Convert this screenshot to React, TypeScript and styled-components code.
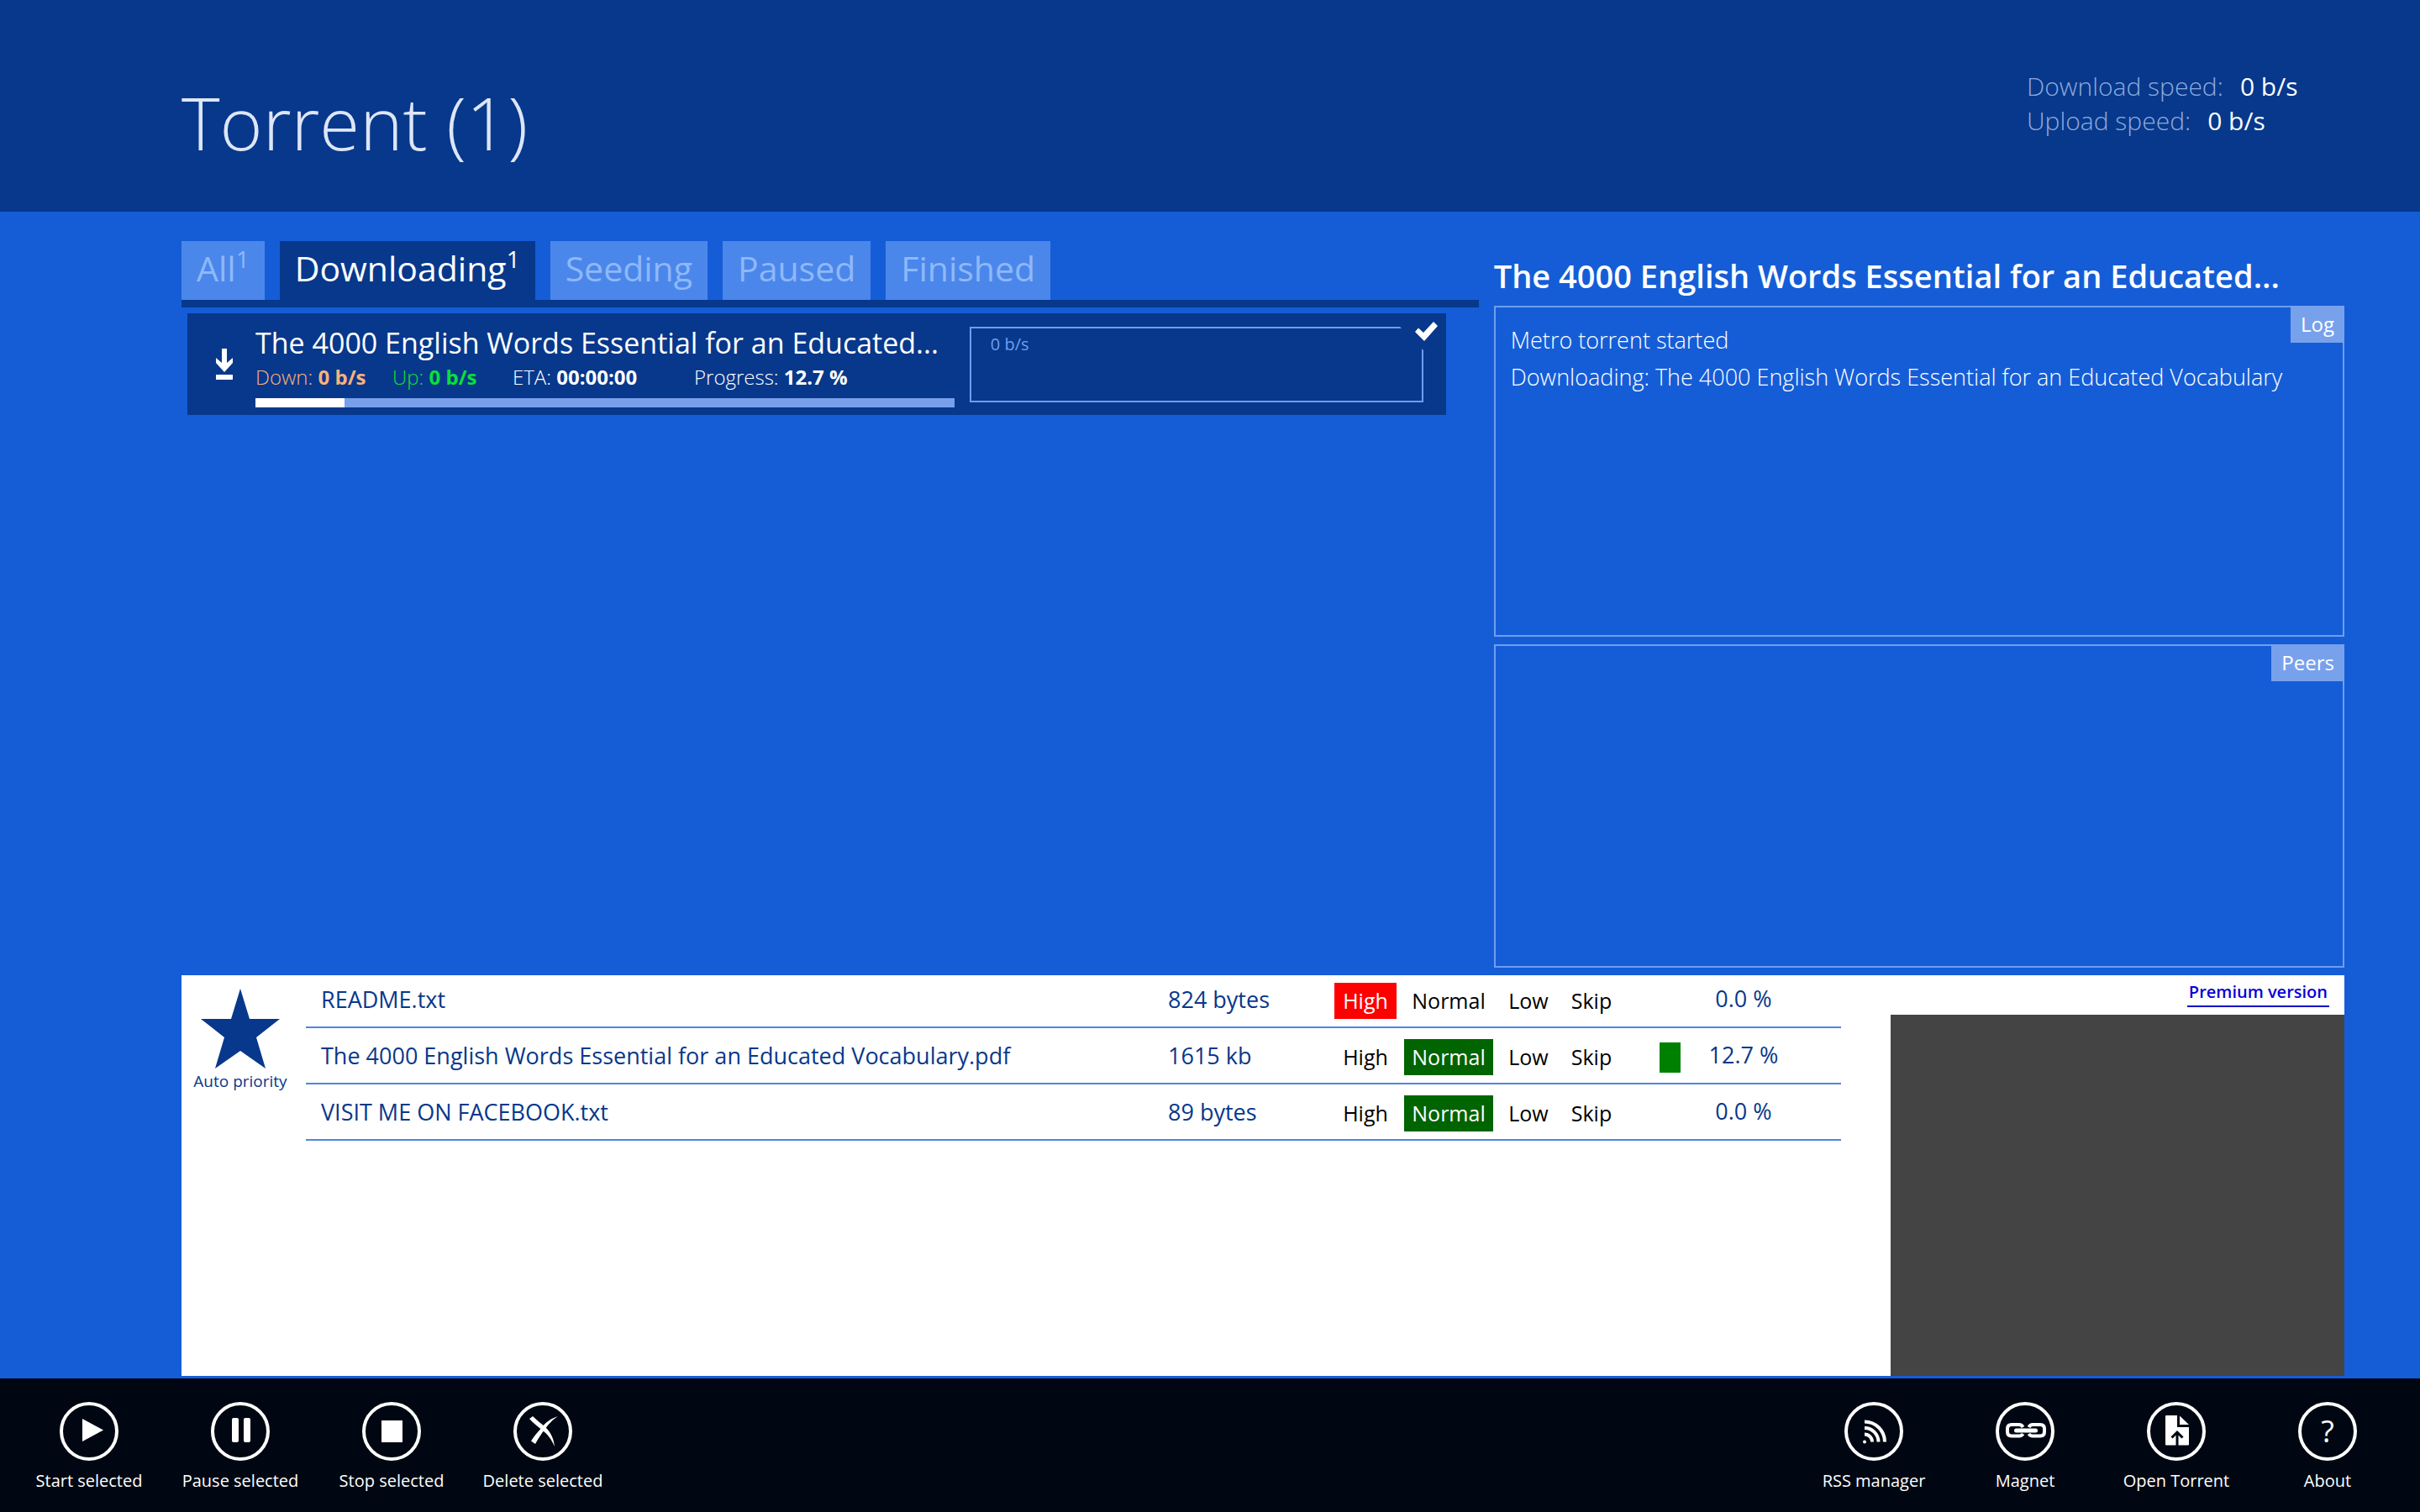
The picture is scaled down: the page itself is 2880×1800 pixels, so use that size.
import React from "react";
import styled, { createGlobalStyle, css } from "styled-components";

const navy = "#07388b";
const blue = "#155dd7";
const line = "#6f9df0";
const tagBlue = "#78a1ec";

const GlobalStyle = createGlobalStyle`
  *, *::before, *::after { box-sizing: border-box; }
  body {
    margin: 0;
    background: ${blue};
    color: #fff;
    font-family: "Open Sans", "Noto Sans", sans-serif;
  }
  button {
    font: inherit;
    color: inherit;
    background: none;
    border: 0;
    padding: 0;
    cursor: pointer;
  }
  h1, h2, h3, p, ul, dl, dd { margin: 0; padding: 0; }
`;

const Page = styled.div`
  min-height: 100vh;
  display: flex;
  flex-direction: column;
`;

const Header = styled.header`
  height: 252px;
  padding: 82px 90px 0 216px;
  background: ${navy};
  display: flex;
  justify-content: space-between;
  align-items: flex-start;
`;

const PageTitle = styled.h1`
  padding-top: 10px;
  font-size: 87px;
  line-height: 106px;
  font-weight: 300;
  color: #dde6f7;
`;

const Speeds = styled.dl`
  width: 378px;
  font-size: 30px;
  line-height: 41px;
`;

const SpeedRow = styled.div`
  display: flex;
  gap: 20px;
`;

const SpeedLabel = styled.dt`
  font-weight: 300;
  color: #8eaade;
`;

const SpeedValue = styled.dd`
  font-weight: 400;
`;

const Main = styled.main`
  flex: 1;
  display: flex;
  flex-direction: column;
  gap: 9px;
  padding: 0 90px 3px 216px;
`;

const Columns = styled.div`
  flex: 1;
  display: grid;
  grid-template-columns: minmax(0, 61fr) minmax(0, 40fr);
  gap: 18px;
`;

const ListColumn = styled.section`
  padding-top: 35px;
`;

const Tabs = styled.div`
  display: flex;
  gap: 18px;
  border-bottom: 9px solid ${navy};
`;

const Tab = styled.button<{ $active?: boolean }>`
  height: 70px;
  padding: 0 18px 5px;
  font-size: 41px;
  line-height: 65px;
  background: ${(p) => (p.$active ? navy : "#4b87ea")};
  color: ${(p) => (p.$active ? "#fff" : "#8fb8fa")};
`;

const Count = styled.sup`
  font-size: 28px;
  line-height: 0;
  vertical-align: 16px;
`;

const TorrentCard = styled.article`
  position: relative;
  display: grid;
  grid-template-columns: 63px minmax(0, 832fr) minmax(0, 540fr);
  column-gap: 18px;
  margin: 7px 39px 0 7px;
  padding-right: 27px;
  background: ${navy};
`;

const StateIcon = styled.svg`
  place-self: center end;
  margin-right: 9px;
`;

const Info = styled.div`
  padding: 9px 0;
`;

const TorrentName = styled.h3`
  font-size: 34px;
  line-height: 52px;
  font-weight: 400;
  white-space: nowrap;
`;

const Stats = styled.div`
  display: grid;
  grid-template-columns: 163px 143px 216px auto;
  font-size: 24px;
  line-height: 30px;
  font-weight: 300;
  white-space: nowrap;
`;

const Stat = styled.span<{ $color?: string }>`
  color: ${(p) => p.$color ?? "#fff"};
  & > b { font-weight: 700; }
`;

const Bar = styled.div`
  height: 11px;
  margin-top: 10px;
  background: #789fea;
`;

const BarFill = styled.div`
  height: 100%;
  background: #fff;
`;

const Chart = styled.div`
  margin: 16px 0 15px;
  padding: 6px 23px;
  border: 2px solid ${line};
  font-size: 20px;
  line-height: 26px;
  color: ${line};
`;

const SelectedCorner = styled.svg`
  position: absolute;
  top: 0;
  right: 0;
`;

const DetailColumn = styled.section`
  display: flex;
  flex-direction: column;
  padding-top: 43px;
`;

const DetailTitle = styled.h2`
  margin-bottom: 3px;
  font-size: 38px;
  line-height: 66px;
  font-weight: 600;
  white-space: nowrap;
`;

const Panel = styled.section<{ $grow: number }>`
  position: relative;
  flex: ${(p) => p.$grow} 1 0;
  padding: 17px 18px;
  border: 2px solid ${line};
  font-size: 27px;
  line-height: 44px;
  font-weight: 300;
  & + & { margin-top: 9px; }
`;

const PanelTag = styled.h3`
  position: absolute;
  top: -2px;
  right: -2px;
  padding: 0 12px;
  font-size: 24px;
  line-height: 44px;
  font-weight: 400;
  background: ${tagBlue};
`;

const Files = styled.section`
  min-height: 477px;
  display: flex;
  background: #fff;
  color: ${navy};
`;

const AutoPriority = styled.button`
  align-self: flex-start;
  width: 140px;
  margin-right: 8px;
  padding-top: 16px;
  display: flex;
  flex-direction: column;
  align-items: center;
  font-size: 19px;
  line-height: 30px;
`;

const FileTable = styled.table`
  flex: 1;
  align-self: flex-start;
  margin-right: 59px;
  border-collapse: separate;
  border-spacing: 0;
  table-layout: fixed;
  font-size: 27px;
  line-height: 43px;
`;

const Col = styled.col<{ $width?: number }>`
  ${(p) => p.$width && css`width: ${p.$width}px;`}
`;

const Cell = styled.td<{ $top: number; $bottom: number; $indent?: boolean }>`
  padding: ${(p) => `${p.$top}px 0 ${p.$bottom}px ${p.$indent ? 18 : 0}px`};
  border-bottom: 2px solid #4f86dc;
  vertical-align: top;
  white-space: nowrap;
  tr:first-child > & { padding-top: ${(p) => p.$top - 4}px; }
`;

const Priorities = styled.div`
  display: grid;
  grid-template-columns: 74px 106px 66px 66px;
  gap: 9px;
`;

const Priority = styled.button<{ $fill?: string }>`
  height: 43px;
  font-size: 25px;
  line-height: 43px;
  color: ${(p) => (p.$fill ? "#fff" : "#000")};
  background: ${(p) => p.$fill ?? "transparent"};
`;

const FileProgress = styled.div`
  display: grid;
  width: 200px;
  height: 36px;
  line-height: 30px;
  text-align: center;
  & > * { grid-area: 1 / 1; }
`;

const FileFill = styled.div`
  height: 36px;
  background: #008000;
`;

const Ad = styled.aside`
  width: 540px;
  display: flex;
  flex-direction: column;
`;

const Premium = styled.a`
  align-self: flex-end;
  margin: 0 18px 9px;
  padding: 4px 2px 0;
  border-bottom: 2px solid #0b0bc0;
  font-size: 20px;
  line-height: 32px;
  font-weight: 600;
  color: #0a00d6;
  text-decoration: none;
`;

const AdBox = styled.div`
  flex: 1;
  background: #444;
`;

const AppBar = styled.footer`
  height: 159px;
  padding: 28px 20px 0 16px;
  display: flex;
  justify-content: space-between;
  background: #000712;
`;

const Group = styled.div`
  display: flex;
`;

const Command = styled.button`
  width: 180px;
  display: flex;
  flex-direction: column;
  align-items: center;
  align-self: flex-start;
  gap: 8px;
  font-size: 20px;
  line-height: 32px;
`;

const Ring = styled.span`
  width: 70px;
  height: 70px;
  display: grid;
  place-items: center;
  border: 4px solid #fff;
  border-radius: 50%;
  font-size: 36px;
  & > svg { margin: -4px; }
`;

type FileRow = { name: string; size: string; priority: string; progress: number };

const files: FileRow[] = [
  { name: "README.txt", size: "824 bytes", priority: "High", progress: 0 },
  {
    name: "The 4000 English Words Essential for an Educated Vocabulary.pdf",
    size: "1615 kb",
    priority: "Normal",
    progress: 12.7,
  },
  { name: "VISIT ME ON FACEBOOK.txt", size: "89 bytes", priority: "Normal", progress: 0 },
];

const levels = ["High", "Normal", "Low", "Skip"];
const levelFill: Record<string, string> = { High: "#ff0000", Normal: "#006400" };

const tabs = [
  { label: "All", count: 1 },
  { label: "Downloading", count: 1, active: true },
  { label: "Seeding" },
  { label: "Paused" },
  { label: "Finished" },
];

const glyph = (children: React.ReactNode) => (
  <svg width="70" height="70" viewBox="0 0 70 70" fill="#fff" aria-hidden="true">
    {children}
  </svg>
);

const leftCommands = [
  { label: "Start selected", icon: glyph(<path d="M27 20 52 33.500 27 47z" />) },
  {
    label: "Pause selected",
    icon: glyph(
      <>
        <rect x="25" y="19" width="8" height="29" rx="2" />
        <rect x="39" y="19" width="8" height="29" rx="2" />
      </>
    ),
  },
  { label: "Stop selected", icon: glyph(<rect x="23" y="22" width="25" height="26" />) },
  {
    label: "Delete selected",
    icon: glyph(
      <>
        <path d="M19 20 23 17C29 23 34 26 39 31C45 37 48 44 49 53C45 44 41 39 35 34C29 29 23 25 19 20z" />
        <path d="M53 17C46 22 42 26 38 32C33 38 30 43 26 50L21 46.500C25 40 29 36 34 30C39 24 44 20 53 17z" />
      </>
    ),
  },
];

const rightCommands = [
  {
    label: "RSS manager",
    icon: glyph(
      <>
        <circle cx="24" cy="47.500" r="2" />
        <g fill="none" stroke="#fff" strokeWidth="4">
          <path d="M24 38.500a9 9 0 0 1 9 9" />
          <path d="M24 31a16.500 16.500 0 0 1 16.500 16.500" />
          <path d="M24 23.500a24 24 0 0 1 24 24" />
        </g>
      </>
    ),
  },
  {
    label: "Magnet",
    icon: glyph(
      <>
        <g fill="none" stroke="#fff" strokeWidth="4">
          <path d="M32.500 30Q31 27 28 27H19Q14 27 14 32V35.500Q14 40.500 19 40.500H28Q31 40.500 32.500 38" />
          <path d="M39.500 30Q41 27 44 27H53Q58 27 58 32V35.500Q58 40.500 53 40.500H44Q41 40.500 39.500 38" />
        </g>
        <rect x="22" y="31.500" width="28" height="5" rx="2.500" />
      </>
    ),
  },
  {
    label: "Open Torrent",
    icon: glyph(
      <>
        <path d="M22 17q0-1 1-1H36V30H50V50.500q0 1-1 1H23q-1 0-1-1z" />
        <path d="M39 16.500 50 27H39z" />
        <path d="M36 52V36M29.500 42.500 36 36 42.500 42.500" fill="none" stroke="#000712" strokeWidth="3" />
      </>
    ),
  },
  { label: "About", icon: "?" },
];

const Commands = ({ items }: { items: { label: string; icon: React.ReactNode }[] }) => (
  <Group>
    {items.map((c) => (
      <Command key={c.label} type="button">
        <Ring>{c.icon}</Ring>
        {c.label}
      </Command>
    ))}
  </Group>
);

export default function App() {
  return (
    <Page>
      <GlobalStyle />
      <Header>
        <PageTitle>Torrent (1)</PageTitle>
        <Speeds>
          <SpeedRow>
            <SpeedLabel>Download speed:</SpeedLabel>
            <SpeedValue>0 b/s</SpeedValue>
          </SpeedRow>
          <SpeedRow>
            <SpeedLabel>Upload speed:</SpeedLabel>
            <SpeedValue>0 b/s</SpeedValue>
          </SpeedRow>
        </Speeds>
      </Header>
      <Main>
        <Columns>
          <ListColumn>
            <Tabs role="tablist">
              {tabs.map((t) => (
                <Tab key={t.label} type="button" role="tab" aria-selected={!!t.active} $active={t.active}>
                  {t.label}
                  {t.count && <Count>{t.count}</Count>}
                </Tab>
              ))}
            </Tabs>
            <TorrentCard>
              <StateIcon width="20" height="37" viewBox="0 0 20 37" fill="#fff" aria-hidden="true">
                <path d="M7 0h6v17l7-6v6L10 28 0 17v-6l7 6z" />
                <rect y="31" width="20" height="6" />
              </StateIcon>
              <Info>
                <TorrentName>The 4000 English Words Essential for an Educated...</TorrentName>
                <Stats>
                  <Stat $color="#f9b27c">Down: <b>0 b/s</b></Stat>
                  <Stat $color="#0be038">Up: <b>0 b/s</b></Stat>
                  <Stat>ETA: <b>00:00:00</b></Stat>
                  <Stat>Progress: <b>12.7 %</b></Stat>
                </Stats>
                <Bar>
                  <BarFill style={{ width: "12.7%" }} />
                </Bar>
              </Info>
              <Chart>0 b/s</Chart>
              <SelectedCorner width="71" height="71" viewBox="0 0 71 71" aria-hidden="true">
                <path d="M0 0h71v71z" fill={navy} />
                <path d="M34 22 38 17.500 44 23 56 10 61 15 45 33z" fill="#fff" />
              </SelectedCorner>
            </TorrentCard>
          </ListColumn>
          <DetailColumn>
            <DetailTitle>The 4000 English Words Essential for an Educated...</DetailTitle>
            <Panel $grow={394}>
              <PanelTag>Log</PanelTag>
              <p>Metro torrent started</p>
              <p>Downloading: The 4000 English Words Essential for an Educated Vocabulary</p>
            </Panel>
            <Panel $grow={385}>
              <PanelTag>Peers</PanelTag>
            </Panel>
          </DetailColumn>
        </Columns>
        <Files>
          <AutoPriority type="button">
            <svg width="94" height="95" viewBox="0 0 94 95" fill={navy} aria-hidden="true">
              <path d="M47 0 58 36H94L66 58 77 95 47 74 17 95 28 58 0 36H36z" />
            </svg>
            Auto priority
          </AutoPriority>
          <FileTable>
            <colgroup>
              <Col />
              <Col $width={198} />
              <Col $width={387} />
              <Col $width={216} />
            </colgroup>
            <tbody>
              {files.map((f) => (
                <tr key={f.name}>
                  <Cell $top={11} $bottom={11} $indent>{f.name}</Cell>
                  <Cell $top={11} $bottom={11}>{f.size}</Cell>
                  <Cell $top={13} $bottom={9}>
                    <Priorities>
                      {levels.map((l) => (
                        <Priority
                          key={l}
                          type="button"
                          aria-pressed={l === f.priority}
                          $fill={l === f.priority ? levelFill[l] : undefined}
                        >
                          {l}
                        </Priority>
                      ))}
                    </Priorities>
                  </Cell>
                  <Cell $top={17} $bottom={12}>
                    <FileProgress>
                      <FileFill style={{ width: `${f.progress}%` }} />
                      <span>{f.progress.toFixed(1)} %</span>
                    </FileProgress>
                  </Cell>
                </tr>
              ))}
            </tbody>
          </FileTable>
          <Ad>
            <Premium href="#premium">Premium version</Premium>
            <AdBox />
          </Ad>
        </Files>
      </Main>
      <AppBar>
        <Commands items={leftCommands} />
        <Commands items={rightCommands} />
      </AppBar>
    </Page>
  );
}
